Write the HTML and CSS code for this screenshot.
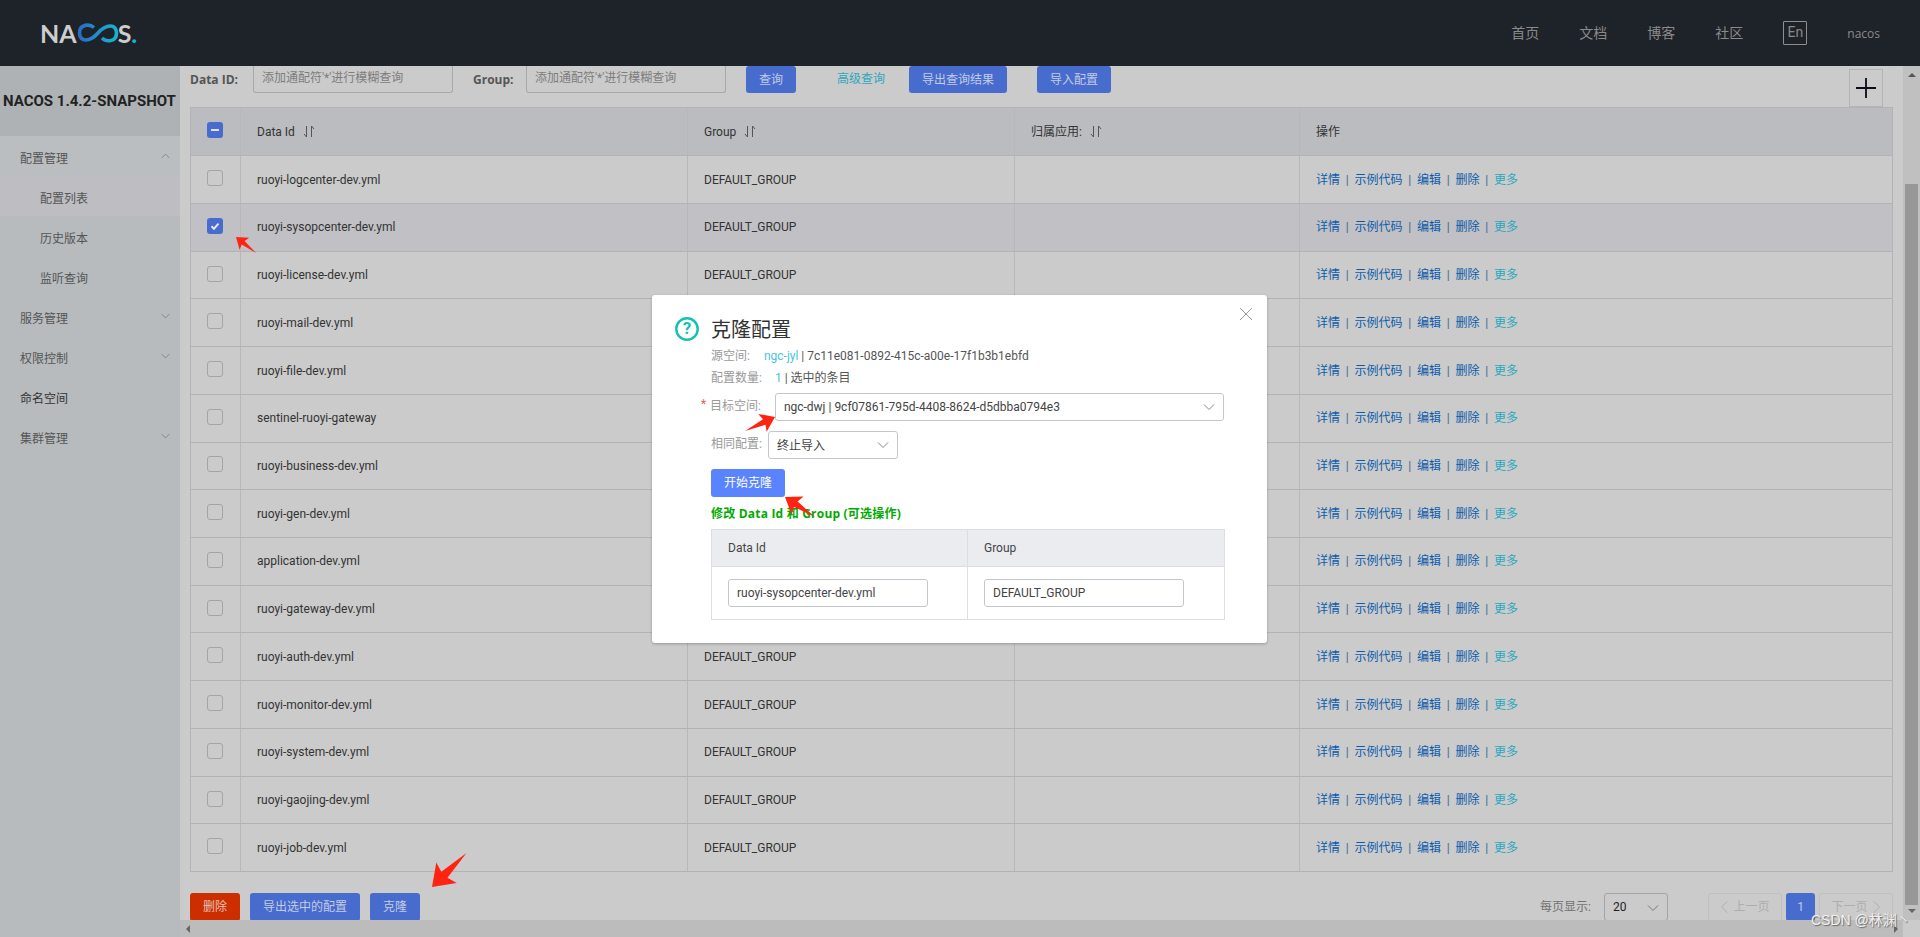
FILE: index.html
```html
<!DOCTYPE html>
<html lang="zh">
<head>
<meta charset="utf-8">
<title>Nacos</title>
<link rel="stylesheet" href="styles.css">
</head>
<body>
<svg class="defs" width="0" height="0">
  <defs>
    <symbol id="sort" viewBox="0 0 12 13">
      <path d="M3.5 1v11M3.5 12L1 9M8.5 12V1M8.5 1l2.5 3" fill="none" stroke="#555" stroke-width="1"/>
    </symbol>
    <symbol id="chev" viewBox="0 0 12 8">
      <path d="M1 1.5l5 5 5-5" fill="none" stroke="currentColor" stroke-width="1"/>
    </symbol>
    <linearGradient id="inf" x1="0" x2="1" y1="0" y2="0">
      <stop offset="0" stop-color="#2a6cc8"/>
      <stop offset="1" stop-color="#18b4cf"/>
    </linearGradient>
  </defs>
</svg>

<header class="topbar">
  <div class="logo">
    <span class="logo-text">NA</span>
    <svg class="logo-inf" viewBox="0 0 42 20" width="42" height="20"><path d="M17 4.5C13 1 2.500 0.500 2.500 10C2.500 19.500 13 19 21 10C29 1 39.500 0.500 39.500 10C39.500 19.500 29 19 25 15" fill="none" stroke="url(#inf)" stroke-width="3.600"/></svg>
    <span class="logo-text">S</span><span class="logo-dot">.</span>
  </div>
  <nav class="topnav">
    <a class="nav-link">首页</a>
    <a class="nav-link">文档</a>
    <a class="nav-link">博客</a>
    <a class="nav-link">社区</a>
    <a class="lang">En</a>
    <a class="user">nacos</a>
  </nav>
</header>

<div class="body-row">
  <aside class="sidebar">
    <h1 class="side-title">NACOS 1.4.2-SNAPSHOT</h1>
    <ul class="menu">
      <li class="menu-item open">配置管理<svg class="chev up"><use href="#chev"/></svg></li>
      <li class="menu-sub active">配置列表</li>
      <li class="menu-sub">历史版本</li>
      <li class="menu-sub">监听查询</li>
      <li class="menu-item">服务管理<svg class="chev"><use href="#chev"/></svg></li>
      <li class="menu-item">权限控制<svg class="chev"><use href="#chev"/></svg></li>
      <li class="menu-item dark">命名空间</li>
      <li class="menu-item">集群管理<svg class="chev"><use href="#chev"/></svg></li>
    </ul>
  </aside>

  <div class="content-col">
    <div class="content-row">
      <main class="main">
        <div class="toolbar">
          <label class="field-label">Data ID:</label>
          <div class="input search-input">添加通配符'*'进行模糊查询</div>
          <label class="field-label group-label">Group:</label>
          <div class="input search-input">添加通配符'*'进行模糊查询</div>
          <button class="btn btn-query">查询</button>
          <a class="adv-link">高级查询</a>
          <button class="btn btn-export">导出查询结果</button>
          <button class="btn btn-import">导入配置</button>
          <div class="plus"><svg viewBox="0 0 20 20" width="20" height="20"><path d="M10 0v20M0 10h20" stroke="#0d0d18" stroke-width="1.800"/></svg></div>
        </div>

        <div class="table">
          <div class="row head">
            <div class="cell check"><span class="cb half"><i></i></span></div>
            <div class="cell">Data Id<svg class="sort"><use href="#sort"/></svg></div>
            <div class="cell">Group<svg class="sort"><use href="#sort"/></svg></div>
            <div class="cell">归属应用:<svg class="sort"><use href="#sort"/></svg></div>
            <div class="cell">操作</div>
          </div>
          <div class="row"><div class="cell check"><span class="cb"></span></div><div class="cell">ruoyi-logcenter-dev.yml</div><div class="cell">DEFAULT_GROUP</div><div class="cell"></div><div class="cell ops"><a>详情</a><b>|</b><a>示例代码</a><b>|</b><a>编辑</a><b>|</b><a>删除</a><b>|</b><a class="more">更多</a></div></div>
          <div class="row selected"><div class="cell check"><span class="cb on"><svg viewBox="0 0 16 16" width="16" height="16"><path d="M4.500 8.200l2.500 2.500 4.500-5" fill="none" stroke="#e4e6f0" stroke-width="2"/></svg></span></div><div class="cell">ruoyi-sysopcenter-dev.yml</div><div class="cell">DEFAULT_GROUP</div><div class="cell"></div><div class="cell ops"><a>详情</a><b>|</b><a>示例代码</a><b>|</b><a>编辑</a><b>|</b><a>删除</a><b>|</b><a class="more">更多</a></div></div>
          <div class="row"><div class="cell check"><span class="cb"></span></div><div class="cell">ruoyi-license-dev.yml</div><div class="cell">DEFAULT_GROUP</div><div class="cell"></div><div class="cell ops"><a>详情</a><b>|</b><a>示例代码</a><b>|</b><a>编辑</a><b>|</b><a>删除</a><b>|</b><a class="more">更多</a></div></div>
          <div class="row"><div class="cell check"><span class="cb"></span></div><div class="cell">ruoyi-mail-dev.yml</div><div class="cell"></div><div class="cell"></div><div class="cell ops"><a>详情</a><b>|</b><a>示例代码</a><b>|</b><a>编辑</a><b>|</b><a>删除</a><b>|</b><a class="more">更多</a></div></div>
          <div class="row"><div class="cell check"><span class="cb"></span></div><div class="cell">ruoyi-file-dev.yml</div><div class="cell"></div><div class="cell"></div><div class="cell ops"><a>详情</a><b>|</b><a>示例代码</a><b>|</b><a>编辑</a><b>|</b><a>删除</a><b>|</b><a class="more">更多</a></div></div>
          <div class="row"><div class="cell check"><span class="cb"></span></div><div class="cell">sentinel-ruoyi-gateway</div><div class="cell"></div><div class="cell"></div><div class="cell ops"><a>详情</a><b>|</b><a>示例代码</a><b>|</b><a>编辑</a><b>|</b><a>删除</a><b>|</b><a class="more">更多</a></div></div>
          <div class="row"><div class="cell check"><span class="cb"></span></div><div class="cell">ruoyi-business-dev.yml</div><div class="cell"></div><div class="cell"></div><div class="cell ops"><a>详情</a><b>|</b><a>示例代码</a><b>|</b><a>编辑</a><b>|</b><a>删除</a><b>|</b><a class="more">更多</a></div></div>
          <div class="row"><div class="cell check"><span class="cb"></span></div><div class="cell">ruoyi-gen-dev.yml</div><div class="cell"></div><div class="cell"></div><div class="cell ops"><a>详情</a><b>|</b><a>示例代码</a><b>|</b><a>编辑</a><b>|</b><a>删除</a><b>|</b><a class="more">更多</a></div></div>
          <div class="row"><div class="cell check"><span class="cb"></span></div><div class="cell">application-dev.yml</div><div class="cell"></div><div class="cell"></div><div class="cell ops"><a>详情</a><b>|</b><a>示例代码</a><b>|</b><a>编辑</a><b>|</b><a>删除</a><b>|</b><a class="more">更多</a></div></div>
          <div class="row"><div class="cell check"><span class="cb"></span></div><div class="cell">ruoyi-gateway-dev.yml</div><div class="cell"></div><div class="cell"></div><div class="cell ops"><a>详情</a><b>|</b><a>示例代码</a><b>|</b><a>编辑</a><b>|</b><a>删除</a><b>|</b><a class="more">更多</a></div></div>
          <div class="row"><div class="cell check"><span class="cb"></span></div><div class="cell">ruoyi-auth-dev.yml</div><div class="cell">DEFAULT_GROUP</div><div class="cell"></div><div class="cell ops"><a>详情</a><b>|</b><a>示例代码</a><b>|</b><a>编辑</a><b>|</b><a>删除</a><b>|</b><a class="more">更多</a></div></div>
          <div class="row"><div class="cell check"><span class="cb"></span></div><div class="cell">ruoyi-monitor-dev.yml</div><div class="cell">DEFAULT_GROUP</div><div class="cell"></div><div class="cell ops"><a>详情</a><b>|</b><a>示例代码</a><b>|</b><a>编辑</a><b>|</b><a>删除</a><b>|</b><a class="more">更多</a></div></div>
          <div class="row"><div class="cell check"><span class="cb"></span></div><div class="cell">ruoyi-system-dev.yml</div><div class="cell">DEFAULT_GROUP</div><div class="cell"></div><div class="cell ops"><a>详情</a><b>|</b><a>示例代码</a><b>|</b><a>编辑</a><b>|</b><a>删除</a><b>|</b><a class="more">更多</a></div></div>
          <div class="row"><div class="cell check"><span class="cb"></span></div><div class="cell">ruoyi-gaojing-dev.yml</div><div class="cell">DEFAULT_GROUP</div><div class="cell"></div><div class="cell ops"><a>详情</a><b>|</b><a>示例代码</a><b>|</b><a>编辑</a><b>|</b><a>删除</a><b>|</b><a class="more">更多</a></div></div>
          <div class="row"><div class="cell check"><span class="cb"></span></div><div class="cell">ruoyi-job-dev.yml</div><div class="cell">DEFAULT_GROUP</div><div class="cell"></div><div class="cell ops"><a>详情</a><b>|</b><a>示例代码</a><b>|</b><a>编辑</a><b>|</b><a>删除</a><b>|</b><a class="more">更多</a></div></div>
        </div>

        <div class="footer">
          <button class="btn btn-del">删除</button>
          <button class="btn btn-sel">导出选中的配置</button>
          <button class="btn btn-clone">克隆</button>
          <div class="pager">
            <span class="pg-label">每页显示:</span>
            <div class="pg-select">20<svg class="chev pg-chev"><use href="#chev"/></svg></div>
            <div class="pg-btn pg-prev"><svg viewBox="0 0 10 16" width="8" height="14"><path d="M9 1L2 8l7 7" fill="none" stroke="currentColor" stroke-width="1.200"/></svg>上一页</div>
            <div class="pg-num">1</div>
            <div class="pg-btn pg-next">下一页<svg viewBox="0 0 10 16" width="8" height="14"><path d="M1 1l7 7-7 7" fill="none" stroke="currentColor" stroke-width="1.200"/></svg></div>
          </div>
        </div>
      </main>
      <div class="vscroll">
        <span class="tri tri-up"></span>
        <div class="vthumb"></div>
        <span class="tri tri-down"></span>
      </div>
    </div>
    <div class="hscroll">
      <div class="hbar">
        <span class="tri tri-left"></span>
        <span class="tri tri-right"></span>
      </div>
      <div class="corner"></div>
    </div>
  </div>
</div>

<section class="dialog">
  <svg class="close" viewBox="0 0 14 14" width="14" height="14"><path d="M1 1l12 12M13 1L1 13" stroke="#9a9a9a" stroke-width="1"/></svg>
  <div class="dlg-head">
    <svg class="dlg-icon" viewBox="0 0 24 24" width="24" height="24"><circle cx="12" cy="12" r="10.700" fill="none" stroke="#14c1b4" stroke-width="2.400"/><text x="12" y="17" text-anchor="middle" class="q">?</text></svg>
    <h2 class="dlg-title">克隆配置</h2>
  </div>
  <div class="dlg-body">
    <p class="info first"><span class="muted">源空间:</span><span class="hl hl-src">ngc-jyl</span> | 7c11e081-0892-415c-a00e-17f1b3b1ebfd</p>
    <p class="info"><span class="muted">配置数量:</span><span class="hl hl-num">1</span> | 选中的条目</p>
    <div class="form-row target">
      <span class="star">*</span><span class="muted lbl-target">目标空间:</span>
      <div class="select sel-target">ngc-dwj | 9cf07861-795d-4408-8624-d5dbba0794e3<svg class="chev sel-chev"><use href="#chev"/></svg></div>
    </div>
    <div class="form-row same">
      <span class="muted lbl-same">相同配置:</span>
      <div class="select sel-same">终止导入<svg class="chev sel-chev"><use href="#chev"/></svg></div>
    </div>
    <button class="btn-start">开始克隆</button>
    <p class="green">修改 Data Id 和 Group (可选操作)</p>
    <div class="edit-table">
      <div class="et-head"><div class="et-cell">Data Id</div><div class="et-cell">Group</div></div>
      <div class="et-row">
        <div class="et-cell"><div class="et-input">ruoyi-sysopcenter-dev.yml</div></div>
        <div class="et-cell"><div class="et-input">DEFAULT_GROUP</div></div>
      </div>
    </div>
  </div>
</section>

<svg class="arrows" viewBox="0 0 1920 937" width="1920" height="937">
  <defs><polygon id="arw" points="0,0 0.42,-0.3 0.36,-0.09 1,0 0.36,0.09 0.42,0.3"/></defs>
  <use href="#arw" fill="#ff2412" transform="translate(236 237) rotate(38.700) scale(25.600)"/>
  <use href="#arw" fill="#ff2412" transform="translate(775 417) rotate(155) scale(33)"/>
  <use href="#arw" fill="#ff2412" transform="translate(785 497) rotate(33.700) scale(36)"/>
  <use href="#arw" fill="#ff2412" transform="translate(432 887) rotate(-44.600) scale(48.400)"/>
</svg>

<div class="watermark">CSDN @林渊丶</div>
</body>
</html>
```

FILE: styles.css
```css
* { box-sizing: border-box; }
html, body { margin: 0; height: 937px; overflow: hidden; }
body {
  position: relative;
  width: 1920px;
  background: #cbcbcb;
  color: #2c2c2c;
  font: 12px/1.5 "Roboto", "Noto Sans CJK SC", sans-serif;
}
p, h1, h2, ul { margin: 0; padding: 0; }
ul { list-style: none; }
.defs { position: absolute; }

/* top bar */
.topbar {
  height: 66px;
  background: #1e2229;
  display: flex;
  align-items: center;
  justify-content: space-between;
  padding: 0 40px;
}
.logo { display: flex; align-items: center; height: 18px; }
.logo-text {
  font: 700 25px/18px "Lato", sans-serif;
  color: #cdcdcd;
}
.logo-inf { margin: 0 -1px 0 0; }
.logo-dot { font: 700 25px/18px "Lato", sans-serif; color: #18b4cf; }
.topnav { display: flex; align-items: center; gap: 40px; color: #8a8a8a; }
.nav-link { font-size: 14px; line-height: 20px; }
.lang {
  width: 24px; height: 24px;
  border: 1px solid #8f8f8f;
  border-radius: 1px;
  font-size: 14px;
  line-height: 20px;
  text-align: center;
  margin-top: -1px;
}
.user { font: 12px/18px "Open Sans", sans-serif; margin-top: 2px; }

/* frame */
.body-row { display: flex; height: 871px; }
.sidebar { width: 180px; flex: none; background: #b7bbbe; }
.side-title {
  height: 70px;
  background: #aeb2b5;
  color: #222;
  font-size: 15px;
  font-weight: 700;
  line-height: 70px;
  padding-left: 3px;
  white-space: nowrap;
}
.menu-item, .menu-sub {
  height: 40px;
  line-height: 46px;
  color: #555;
  position: relative;
}
.menu-item { padding-left: 20px; }
.menu-item.open { background: #babec1; }
.menu-item.dark { color: #333; }
.menu-sub { padding-left: 40px; }
.menu-sub.active { background: #bdbdc2; }
.chev { width: 9px; height: 6px; color: #777; }
.menu-item .chev { position: absolute; right: 10px; top: 17px; }
.chev.up { transform: rotate(180deg); }

.content-col { flex: 1; min-width: 0; display: flex; flex-direction: column; }
.content-row { display: flex; height: 854px; }
.main { width: 1723px; padding: 0 10px; overflow: hidden; }

/* toolbar */
.toolbar { display: flex; align-items: flex-start; height: 41px; }
.field-label { font: 700 12px/27px "Open Sans", sans-serif; color: #555; width: 63px; }
.group-label { width: 53px; margin-left: 20px; }
.input {
  border: 1px solid #a9a9ad;
  border-radius: 3px;
  height: 27px;
  line-height: 25px;
  color: #7d7d7d;
}
.search-input { width: 200px; padding-left: 8px; border-top-left-radius: 0; border-top-right-radius: 0; border-top: 0; }
.btn {
  border: 0;
  border-radius: 3px;
  background: #486bce;
  color: #c3cbe3;
  font: 12px/1 "Roboto", "Noto Sans CJK SC", sans-serif;
  height: 27px;
  padding: 0;
  text-align: center;
}
.btn-query { width: 50px; margin-left: 20px; }
.adv-link { color: #2fa6bd; margin-left: 41px; width: 48px; line-height: 27px; }
.btn-export { width: 98px; margin-left: 24px; }
.btn-import { width: 74px; margin-left: 30px; }
.plus {
  width: 34px; height: 38px;
  margin: 3px 10px 0 auto;
  border: 1px solid #b4b4b6;
  display: flex; align-items: center; justify-content: center;
}

/* table */
.table { border: 1px solid #b3b3b7; border-bottom: 0; width: 1703px; }
.row {
  display: grid;
  grid-template-columns: 49px 447px 327px 285px 1fr;
  height: 47.730px;
  border-bottom: 1px solid #b3b3b7;
  background: #cbcbcb;
}
.row.head { height: 48.300px; background: #babcbf; }
.row.selected { background: #c0c0c5; }
.cell {
  display: flex;
  align-items: center;
  padding-left: 16px;
  border-left: 1px solid #b8b8bb;
  color: #333;
  white-space: nowrap;
}
.cell.check { border-left: 0; padding: 0 0 0 16px; }
.sort { width: 12px; height: 13px; margin-left: 8px; }
.cb {
  width: 16px; height: 16px;
  margin-bottom: 3px;
  border: 1px solid #a4a4a9;
  border-radius: 3px;
  display: block;
  position: relative;
}
.cb.on, .cb.half { background: #486bce; border: 0; }
.cb.on svg { display: block; }
.cb.half i { position: absolute; left: 4px; top: 7px; width: 8px; height: 2px; background: #dfe3f0; }
.ops { color: #4a6a8a; }
.ops a { color: #0d5cab; }
.ops a.more { color: #2aa7bf; }
.ops b { font-weight: 400; margin: 0 5px; width: 4.500px; text-align: center; color: #3a6a96; }

/* footer */
.footer { display: flex; margin-top: 21px; height: 28px; align-items: flex-start; }
.footer .btn { height: 28px; }
.btn-del { width: 50px; background: #cc2e00; color: #e3c2b5; }
.btn-sel { width: 110px; margin-left: 10px; }
.btn-clone { width: 50px; margin-left: 10px; }
.pager { margin-left: auto; display: flex; align-items: center; height: 28px; }
.pg-label { color: #727272; width: 64px; }
.pg-select {
  width: 64px; height: 28px;
  border: 1px solid #a4a4a9;
  border-radius: 3px;
  line-height: 26px;
  padding-left: 8px;
  color: #222;
  position: relative;
}
.pg-chev { position: absolute; right: 8px; top: 10px; width: 12px; height: 8px; }
.pg-btn {
  width: 74px; height: 28px;
  border: 1px solid #c0c0c2;
  border-radius: 3px;
  color: #aeaeae;
  display: flex; align-items: center; justify-content: center; gap: 5px;
}
.pg-prev { margin-left: 40px; }
.pg-next { margin-left: 4px; }
.pg-num {
  width: 29px; height: 28px;
  margin-left: 4px;
  border-radius: 3px;
  background: #486bce;
  color: #c3cbe3;
  text-align: center;
  line-height: 28px;
}

/* scrollbars */
.vscroll { width: 17px; flex: none; background: #c0c0c0; display: flex; flex-direction: column; align-items: center; }
.vthumb { width: 13px; height: 721px; margin-top: 107px; background: #989898; }
.tri { width: 0; height: 0; display: block; border-style: solid; border-color: transparent; }
.tri-up { border-width: 0 4px 4px; border-bottom-color: #555; margin-top: 7px; }
.tri-down { border-width: 4px 4px 0; border-top-color: #666; margin-top: 4px; }
.hscroll { display: flex; height: 17px; }
.hbar { flex: 1; background: #bcbcbc; display: flex; align-items: center; justify-content: space-between; padding: 0 5px 0 6px; }
.corner { width: 17px; background: #cbcbcb; }
.tri-left { border-width: 4px 4px 4px 0; border-right-color: #666; }
.tri-right { border-width: 4px 0 4px 4px; border-left-color: #666; }

/* dialog */
.dialog {
  position: absolute;
  left: 652px; top: 295px;
  width: 615px; height: 348px;
  background: #fff;
  border-radius: 3px;
  box-shadow: 0 1px 3px rgba(0,0,0,.25);
  padding: 22px 43px 0 23px;
  color: #333;
}
.close { position: absolute; right: 14px; top: 12px; }
.dlg-head { display: flex; align-items: center; height: 24px; gap: 12px; }
.dlg-icon { flex: none; }
.q { font: 700 17px "Roboto", sans-serif; fill: #14c1b4; }
.dlg-title { font-size: 20px; font-weight: 400; line-height: 26px; color: #333; margin-top: 2px; }
.dlg-body { margin: 0 0 0 36px; }
.info { line-height: 22px; color: #555; }
.info.first { margin-top: 4px; }
.muted { color: #999; }
.hl { color: #49c4e0; }
.hl-src { margin-left: 14px; }
.hl-num { margin-left: 13px; }
.form-row { display: flex; }
.target { margin: 4px 0 0 -1px; height: 28px; align-items: flex-start; position: relative; }
.star { color: #f25a5a; position: absolute; left: -9px; top: 2px; line-height: 18px; }
.lbl-target { width: 65px; margin-left: 0; line-height: 26px; }
.select {
  height: 28px;
  border: 1px solid #c4c6cf;
  border-radius: 3px;
  line-height: 26px;
  padding-left: 8px;
  color: #444;
  position: relative;
}
.sel-target { width: 450px; }
.same { margin-top: 10px; align-items: flex-start; }
.lbl-same { width: 57px; line-height: 26px; }
.sel-same { width: 130px; line-height: 28px; }
.sel-chev { position: absolute; right: 8px; top: 9px; width: 12px; height: 8px; color: #888; }
.btn-start {
  display: block;
  margin-top: 10px;
  width: 74px; height: 28px;
  border: 0; border-radius: 3px;
  background: #5a84ff;
  color: #fff;
  font: 12px/1 "Roboto", "Noto Sans CJK SC", sans-serif;
  padding: 0;
}
.green {
  color: #0a0;
  font: 700 12px/18px "Open Sans", "Noto Sans CJK SC", sans-serif;
  letter-spacing: .2px;
  margin-top: 8px;
}
.edit-table { width: 514px; margin-top: 6px; border: 1px solid #dcdee3; }
.et-head { display: grid; grid-template-columns: 255px 1fr; height: 37px; background: #ebecf0; border-bottom: 1px solid #dcdee3; }
.et-row { display: grid; grid-template-columns: 255px 1fr; height: 52px; }
.et-cell { padding-left: 16px; line-height: 36px; color: #444; }
.et-cell + .et-cell { border-left: 1px solid #dcdee3; }
.et-row .et-cell { padding-top: 12px; }
.et-input {
  width: 200px; height: 28px;
  border: 1px solid #c4c6cf;
  border-radius: 3px;
  padding-left: 8px;
  line-height: 26px;
}

/* overlays */
.arrows { position: absolute; left: 0; top: 0; pointer-events: none; }
.watermark {
  position: absolute;
  left: 1811px; top: 910px;
  font: 14px/20px "Liberation Sans", "Noto Sans CJK SC", sans-serif;
  color: #f0f0f0;
  text-shadow: 1px 1px 1px #666;
  white-space: nowrap;
}
```
